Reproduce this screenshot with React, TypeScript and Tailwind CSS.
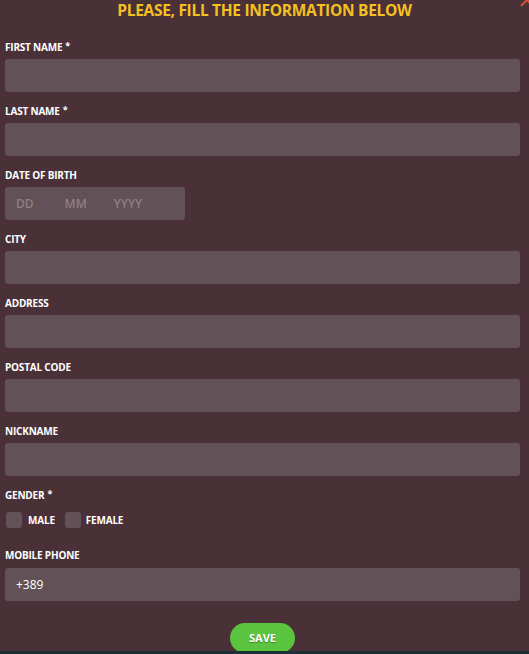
import React from "react";

const Label = ({ text, req }: { text: string; req?: boolean }) => (
  <div className="h-[12px] text-[10px] leading-[12px] font-bold text-white tracking-[-0.2px]">
    {text}
    {req && <span className="ml-[3px] text-[9px] relative top-[-2px]">*</span>}
  </div>
);

const Field = ({ label, req, value }: { label: string; req?: boolean; value?: string }) => (
  <div className="mb-[13px]">
    <Label text={label} req={req} />
    <div className="mt-[6px] h-[33px] rounded-[3px] bg-[#625157] px-[11px] flex items-center text-[12px] text-white">
      {value}
    </div>
  </div>
);

export default function App() {
  return (
    <div className="w-[529px] h-[654px] overflow-hidden bg-[#1c3036] font-['Open_Sans',sans-serif]">
      <div className="relative h-[651px] overflow-hidden bg-[#4a3138] pl-[5px] pr-[9px]">
        <svg className="absolute right-[-6px] top-[-8px]" width="16" height="16" viewBox="0 0 16 16">
          <path d="M2 2 L14 14 M14 2 L2 14" stroke="#d4532a" strokeWidth="2" />
        </svg>
        <h1 className="h-[20px] ml-[4px] text-center text-[15.5px] leading-[20px] font-bold text-[#f4c020] tracking-[-0.3px] mb-[21px]">
          PLEASE, FILL THE INFORMATION BELOW
        </h1>
        <Field label="FIRST NAME" req />
        <Field label="LAST NAME" req />
        <div className="mb-[13px]">
          <Label text="DATE OF BIRTH" />
          <div className="mt-[6px] h-[33px] w-[180px] rounded-[3px] bg-[#625157] flex items-center text-[12px] font-semibold text-[#8f7f84]">
            <span className="ml-[11px]">DD</span>
            <span className="ml-[31px]">MM</span>
            <span className="ml-[27px]">YYYY</span>
          </div>
        </div>
        <Field label="CITY" />
        <Field label="ADDRESS" />
        <Field label="POSTAL CODE" />
        <Field label="NICKNAME" />
        <Label text="GENDER" req />
        <div className="mt-[11px] flex items-center h-[16px] text-[10px] font-bold text-white tracking-[-0.2px]">
          <span className="ml-[1px] w-[16px] h-[16px] rounded-[3px] bg-[#625157]" />
          <span className="ml-[6px]">MALE</span>
          <span className="ml-[10px] w-[16px] h-[16px] rounded-[3px] bg-[#625157]" />
          <span className="ml-[5px]">FEMALE</span>
        </div>
        <div className="mt-[21px]">
          <Label text="MOBILE PHONE" />
          <div className="mt-[7px] h-[33px] rounded-[3px] bg-[#625157] px-[11px] flex items-center text-[12px] text-white">
            +389
          </div>
        </div>
        <div className="mt-[22px] flex justify-center">
          <button className="w-[65px] h-[30px] rounded-full bg-[#5bc43f] text-[11px] font-bold text-white [text-shadow:0_1px_1px_rgba(0,0,0,0.35)]">
            SAVE
          </button>
        </div>
      </div>
    </div>
  );
}
